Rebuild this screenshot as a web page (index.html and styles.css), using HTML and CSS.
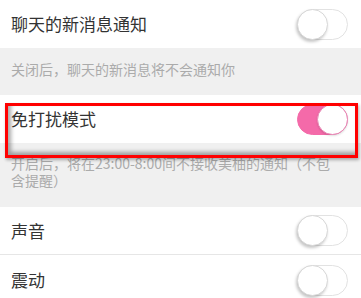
FILE: index.html
```html
<!DOCTYPE html>
<html lang="zh">
<head>
<meta charset="utf-8">
<title>设置</title>
<link rel="stylesheet" href="styles.css">
</head>
<body>
<div class="page">
  <div class="row row-first">
    <span class="label">聊天的新消息通知</span>
    <span class="switch"><span class="knob"></span></span>
  </div>
  <div class="desc desc-one">关闭后，聊天的新消息将不会通知你</div>
  <div class="row row-dnd">
    <span class="label">免打扰模式</span>
    <span class="switch on"><span class="knob"></span></span>
  </div>
  <div class="desc desc-two">开启后，将在23:00-8:00间不接收美柚的通知（不包<br>含提醒）</div>
  <div class="row row-sound">
    <span class="label">声音</span>
    <span class="switch"><span class="knob"></span></span>
  </div>
  <div class="row row-vibrate">
    <span class="label">震动</span>
    <span class="switch"><span class="knob"></span></span>
  </div>
  <div class="highlight"></div>
</div>
</body>
</html>
```
FILE: styles.css
```css
html, body {
  margin: 0;
  padding: 0;
  background: #ffffff;
}
body {
  font-family: "Noto Sans CJK SC", "Noto Sans", sans-serif;
  width: 361px;
  height: 298px;
  overflow: hidden;
}
.page {
  position: relative;
  display: flex;
  flex-direction: column;
}
.row {
  display: flex;
  align-items: center;
  justify-content: space-between;
  padding: 0 13px 0 11px;
  background: #ffffff;
}
.row-first { height: 48px; }
.row-dnd { height: 48px; }
.row-sound {
  height: 47px;
  position: relative;
  border-bottom: 1px solid #e6e6e6;
}
.row-vibrate { height: 50px; padding-bottom: 2px; }
.label {
  font-size: 17px;
  color: #333333;
  line-height: 20px;
}
.desc {
  background: #f0f0f0;
  color: #ababab;
  font-size: 14px;
  line-height: 17px;
  padding: 0 10px 0 11px;
}
.desc-one {
  height: 47px;
  display: flex;
  align-items: center;
  box-sizing: border-box;
  padding-bottom: 4px;
}
.desc-two {
  height: 64px;
  box-sizing: border-box;
  padding-top: 12px;
}
.switch {
  width: 51px;
  height: 31px;
  box-sizing: border-box;
  border-radius: 16px;
  border: 1px solid #e2e2e2;
  background: #ffffff;
  position: relative;
  flex: none;
}
.switch .knob {
  position: absolute;
  left: -1px;
  top: -1px;
  width: 31px;
  height: 31px;
  box-sizing: border-box;
  border-radius: 50%;
  background: #ffffff;
  border: 1px solid #d8d8d8;
  box-shadow: -1px 2px 3px rgba(0, 0, 0, 0.22);
}
.switch.on {
  background: #f46aa9;
  border-color: #f46aa9;
}
.switch.on .knob {
  left: auto;
  right: -1px;
  border: 1px solid #e98ab7;
  box-shadow: 0 1px 2px rgba(0, 0, 0, 0.12);
}
.highlight {
  position: absolute;
  left: 5px;
  top: 103px;
  width: 353px;
  height: 55px;
  box-sizing: border-box;
  border: 3px solid #ff0000;
  box-shadow: inset 3px -3px 4px rgba(0, 0, 0, 0.35), 1px 2px 3px rgba(0, 0, 0, 0.3);
}
```
